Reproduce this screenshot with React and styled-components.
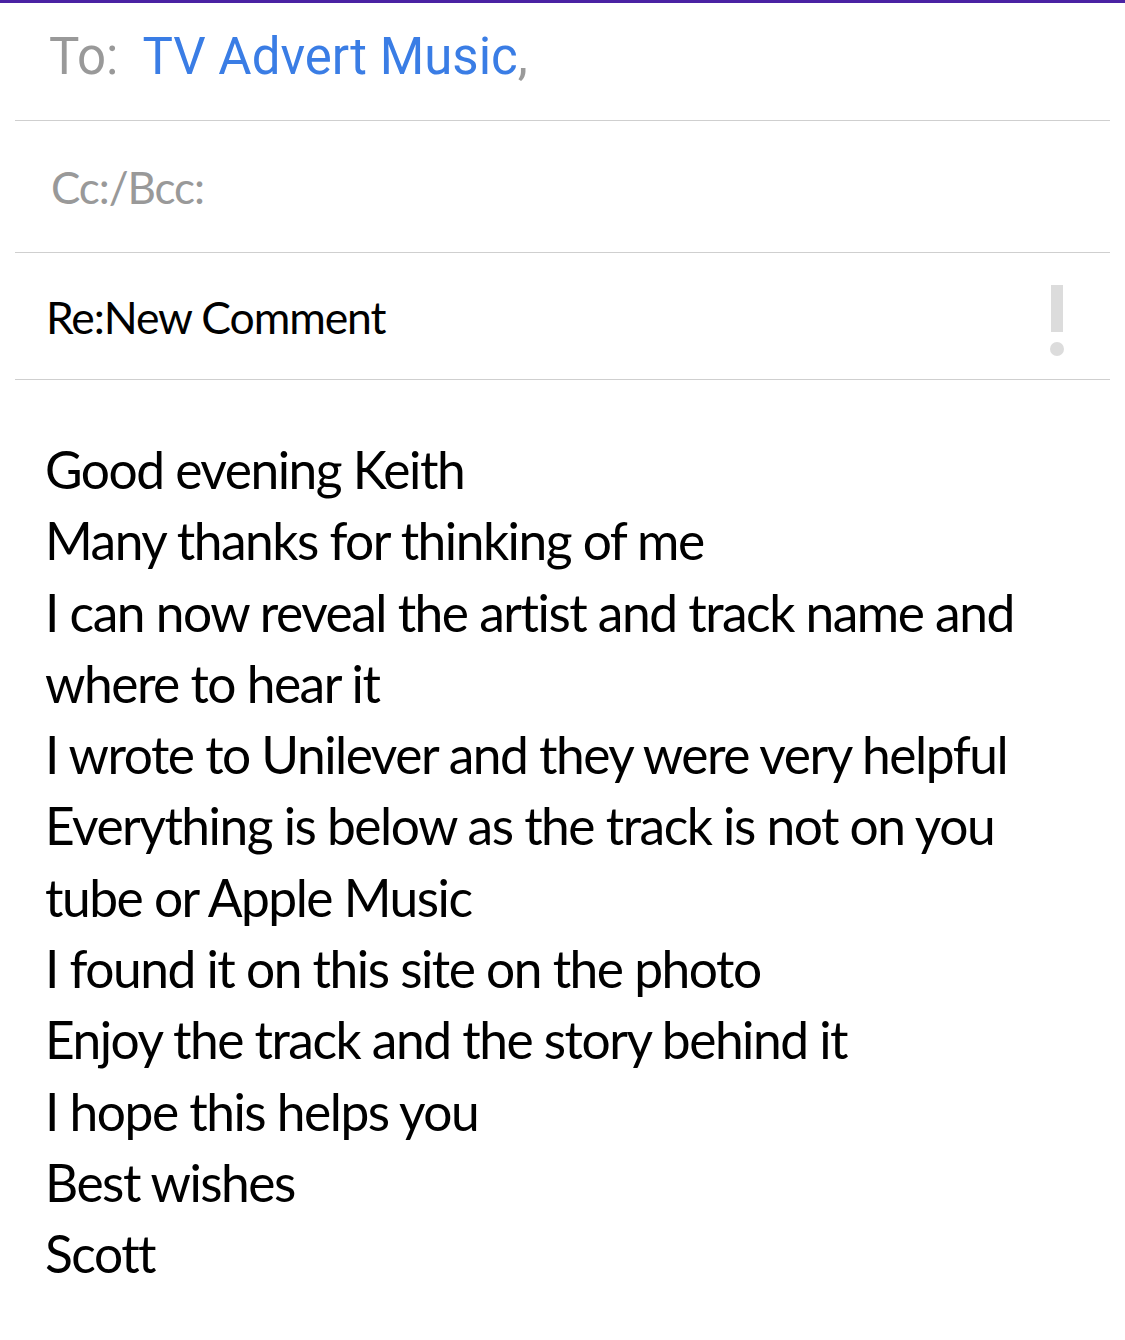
import React from 'react'
import styled, { createGlobalStyle } from 'styled-components'

const Global = createGlobalStyle`
  body {
    margin: 0;
    background: #fff;
  }
`

const Screen = styled.div`
  width: 1125px;
  min-height: 1340px;
  background: #fff;
  border-top: 3px solid #4a22a3;
  box-sizing: border-box;
`

const Field = styled.div`
  display: flex;
  align-items: center;
  height: ${({ $h }) => $h}px;
  margin: 0 15px;
  padding: 0 46px ${({ $lift }) => $lift || 0}px 30px;
  border-bottom: 1.5px solid #cfcfcf;
  box-sizing: border-box;
`

const Label = styled.span`
  font-family: Roboto, sans-serif;
  font-size: 51px;
  color: #999;
  margin-right: 24px;
  margin-left: 4px;
`

const Recipient = styled.span`
  font-family: Roboto, sans-serif;
  font-size: 51px;
  color: #3a7de5;
`

const Comma = styled.span`
  color: #9a9a9a;
`

const Plain = styled.span`
  font-family: Lato, sans-serif;
  font-size: ${({ $size }) => $size}px;
  letter-spacing: -1.1px;
  color: ${({ $muted }) => ($muted ? '#999' : '#000')};
  margin-left: ${({ $muted }) => ($muted ? 6 : 1)}px;
  flex: 1;
`

const Priority = styled.div`
  display: flex;
  flex-direction: column;
  align-items: center;
  gap: 10px;
  margin-top: 8px;
  &::before {
    content: '';
    width: 12px;
    height: 47px;
    background: #dcdcdc;
  }
  &::after {
    content: '';
    width: 14px;
    height: 14px;
    border-radius: 50%;
    background: #dcdcdc;
  }
`

const Body = styled.div`
  padding: 54px 20px 40px 45px;
  font-family: Lato, sans-serif;
  font-size: 51.5px;
  line-height: 71.3px;
  letter-spacing: -1.5px;
  color: #000;
`

const Line = styled.div`
  white-space: nowrap;
`

const lines = [
  'Good evening Keith',
  'Many thanks for thinking of me',
  'I can now reveal the artist and track name and',
  'where to hear it',
  'I wrote to Unilever and they were very helpful',
  'Everything is below as the track is not on you',
  'tube or Apple Music',
  'I found it on this site on the photo',
  'Enjoy the track and the story behind it',
  'I hope this helps you',
  'Best wishes',
  'Scott',
]

export default function App() {
  return (
    <>
      <Global />
      <Screen>
        <Field $h={118} $lift={10}>
          <Label>To:</Label>
          <Recipient>
            TV Advert Music<Comma>,</Comma>
          </Recipient>
        </Field>
        <Field $h={132}>
          <Plain $size={44} $muted>
            Cc:/Bcc:
          </Plain>
        </Field>
        <Field $h={127}>
          <Plain $size={44.5}>Re:New Comment</Plain>
          <Priority />
        </Field>
        <Body>
          {lines.map((l, i) => (
            <Line key={i}>{l}</Line>
          ))}
        </Body>
      </Screen>
    </>
  )
}
